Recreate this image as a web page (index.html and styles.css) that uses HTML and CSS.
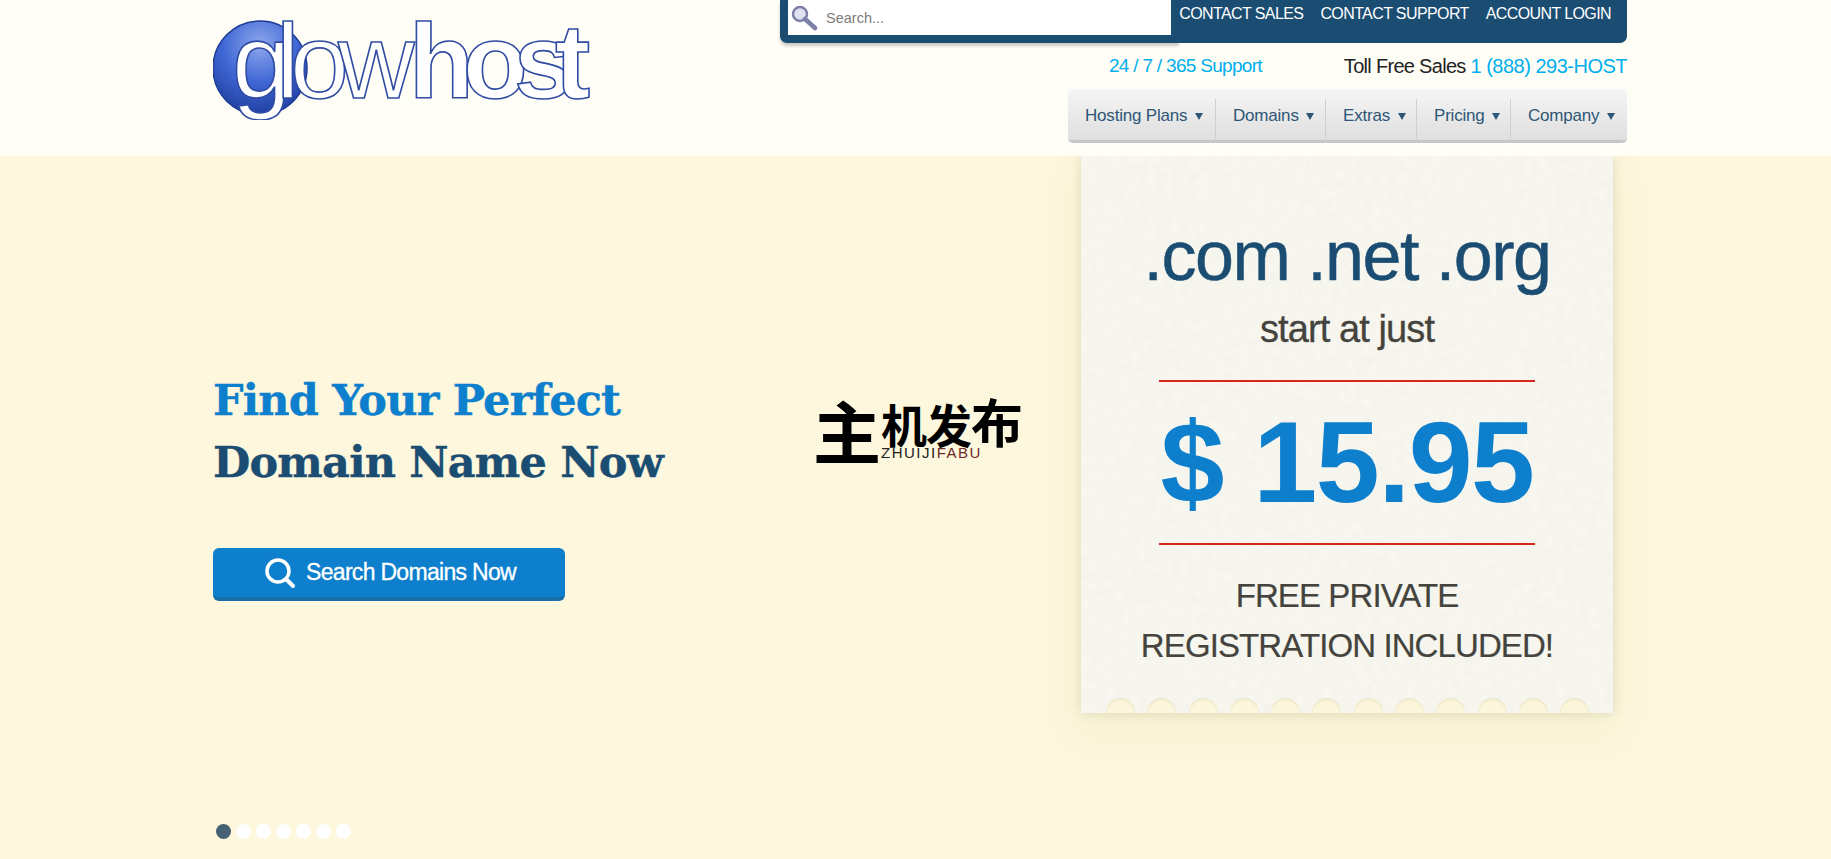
FILE: index.html
```html
<!DOCTYPE html>
<html lang="en">
<head>
    <meta charset="utf-8">
    <title>GlowHost</title>
    <meta name="viewport" content="width=device-width, initial-scale=1.0">
    <link rel="stylesheet" href="styles.css">
</head>
<body>
    <header class="site-header">
        <a class="logo" href="#">
            <svg width="380" height="120" viewBox="0 0 380 120">
                <defs>
                    <radialGradient id="ball" cx="50%" cy="25%" r="80%">
                        <stop offset="0" stop-color="#8ea8ec"/>
                        <stop offset="0.5" stop-color="#4067d4"/>
                        <stop offset="1" stop-color="#1c3a9a"/>
                    </radialGradient>
                </defs>
                <circle cx="47" cy="68" r="47" fill="url(#ball)" stroke="#1e3a94" stroke-width="1.5"/>
                <text class="logo-word" y="98"><tspan x="19">g</tspan><tspan x="63">l</tspan><tspan x="77">o</tspan><tspan x="125">w</tspan><tspan class="logo-bold" x="196">h</tspan><tspan class="logo-bold" x="250">o</tspan><tspan class="logo-bold" x="301">s</tspan><tspan class="logo-bold" x="342">t</tspan></text>
            </svg>
        </a>
        <div class="header-right">
            <div class="topbar">
                <div class="topbar-search">
                    <form class="search-form">
                        <svg class="search-icon" width="28" height="28" viewBox="0 0 28 28">
                            <circle cx="10" cy="10" r="7" fill="#dfe1ee" stroke="#7c7fa6" stroke-width="2.5"/>
                            <path d="M15 15 L25 24" stroke="#7c7fa6" stroke-width="4.5" stroke-linecap="round"/>
                        </svg>
                        <input type="text" placeholder="Search...">
                    </form>
                </div>
                <nav class="topbar-links">
                    <a href="#">CONTACT SALES</a>
                    <a href="#">CONTACT SUPPORT</a>
                    <a href="#">ACCOUNT LOGIN</a>
                </nav>
            </div>
            <div class="phones">
                <span class="phone-support">24 / 7 / 365 Support</span>
                <span class="phone-sales">Toll Free Sales <b>1 (888) 293-HOST</b></span>
            </div>
            <nav class="mainnav">
                <a class="nav-hosting" href="#">Hosting Plans <i></i></a>
                <a class="nav-domains" href="#">Domains <i></i></a>
                <a class="nav-extras" href="#">Extras <i></i></a>
                <a class="nav-pricing" href="#">Pricing <i></i></a>
                <a class="nav-company" href="#">Company <i></i></a>
            </nav>
        </div>
    </header>

    <section class="hero">
        <div class="hero-left">
            <h1><span>Find Your Perfect</span><br>Domain Name Now</h1>
            <a class="search-btn" href="#">
                <svg width="32" height="32" viewBox="0 0 32 32">
                    <circle cx="14" cy="14" r="11" fill="none" stroke="#fff" stroke-width="3.5"/>
                    <path d="M22 22 L29 29" stroke="#fff" stroke-width="4" stroke-linecap="round"/>
                </svg>
                Search Domains Now
            </a>
            <div class="dots">
                <span class="dot active"></span>
                <span class="dot"></span>
                <span class="dot"></span>
                <span class="dot"></span>
                <span class="dot"></span>
                <span class="dot"></span>
                <span class="dot"></span>
            </div>
        </div>

        <div class="zhuji">
            <div class="zhuji-big">主</div>
            <div class="zhuji-right">
                <div class="zhuji-cn">机发<span>布</span></div>
                <div class="zhuji-en">ZHUIJI<em>FABU</em></div>
            </div>
        </div>

        <div class="ticket">
            <svg class="paper" width="100%" height="100%">
                <filter id="grain">
                    <feTurbulence type="fractalNoise" baseFrequency="0.12" numOctaves="4" seed="4"/>
                    <feColorMatrix values="0 0 0 0 0.6  0 0 0 0 0.6  0 0 0 0 0.52  0 0 0 0.14 -0.02"/>
                </filter>
                <rect width="100%" height="100%" filter="url(#grain)"/>
            </svg>
            <div class="ticket-tlds">.com .net .org</div>
            <div class="ticket-start">start at just</div>
            <div class="ticket-price">$ 15.95</div>
            <div class="ticket-free">FREE PRIVATE<br>REGISTRATION INCLUDED!</div>
            <div class="notches">
                <span></span><span></span><span></span><span></span><span></span><span></span>
                <span></span><span></span><span></span><span></span><span></span><span></span>
            </div>
        </div>
    </section>
</body>
</html>
```

FILE: styles.css
```css
html, body {
    height: 100%;
}

body {
    margin: 0;
    font-family: 'Liberation Sans', Arial, sans-serif;
    display: flex;
    flex-direction: column;
    overflow: hidden;
    background-color: #fcf7dd;
}

a {
    text-decoration: none;
    color: inherit;
}

/* header */
.site-header {
    position: relative;
    z-index: 1;
    height: 156px;
    flex: none;
    display: flex;
    justify-content: space-between;
    padding: 0 204px 0 213px;
    background-color: #fffef6;
}

.logo {
    display: block;
    height: 120px;
}

.logo-word {
    font-family: 'Liberation Sans', sans-serif;
    font-size: 106px;
    fill: #ffffff;
    stroke: #2f4ba3;
    stroke-width: 1.6px;
}

.logo-bold {
    font-weight: bold;
}

.header-right {
    width: 847px;
}

.topbar {
    display: flex;
    height: 43px;
}

.topbar-search {
    width: 413px;
    padding: 0 8px;
    box-sizing: border-box;
    background-color: #1b4d72;
    border-radius: 0 0 0 7px;
    box-shadow: 0 3px 3px rgba(0, 0, 0, 0.2);
}

.search-form {
    display: flex;
    align-items: center;
    height: 35px;
    background-color: #ffffff;
}

.search-icon {
    margin-left: 2px;
    flex: none;
}

.search-form input {
    flex: 1;
    min-width: 0;
    border: none;
    outline: none;
    padding: 0;
    margin-left: 8px;
    background: none;
    font-family: 'Liberation Sans', sans-serif;
    font-size: 14.5px;
}

.search-form input::placeholder {
    color: #7d7d7d;
    opacity: 1;
}

.topbar-links {
    position: relative;
    flex: 1;
    display: flex;
    justify-content: flex-end;
    gap: 17px;
    padding: 5px 16px 0 0;
    background-color: #1b4d72;
    border-radius: 0 0 7px 0;
    color: #ffffff;
    font-size: 16px;
    letter-spacing: -0.6px;
    line-height: 18px;
    white-space: nowrap;
}

.phones {
    display: flex;
    justify-content: flex-end;
    gap: 82px;
    height: 46px;
    padding-top: 10px;
    box-sizing: border-box;
    font-size: 20px;
    letter-spacing: -0.7px;
    line-height: 26px;
    color: #222222;
}

.phone-support {
    font-size: 19px;
    color: #00aeef;
}

.phone-sales b {
    font-weight: normal;
    letter-spacing: -0.5px;
    color: #00aeef;
}

.mainnav {
    display: flex;
    width: 559px;
    height: 54px;
    margin-left: auto;
    box-sizing: border-box;
    background: linear-gradient(#f5f5f5, #dfdfdf);
    border-bottom: 3px solid #c6c6c6;
    border-radius: 5px;
    font-size: 17px;
    letter-spacing: -0.2px;
    color: #2d5677;
}

.mainnav a {
    box-sizing: border-box;
    margin-top: 10px;
    padding: 4px 0 0 17px;
    height: 44px;
    line-height: 26px;
    border-right: 1px solid #cfcfcf;
    white-space: nowrap;
}

.mainnav a:last-child {
    border-right: none;
}

.nav-hosting { width: 148px; }
.nav-domains { width: 110px; }
.nav-extras { width: 91px; }
.nav-pricing { width: 94px; }
.nav-company { width: 116px; }

.mainnav i {
    display: inline-block;
    margin-left: 3px;
    vertical-align: 1px;
    border-left: 4px solid transparent;
    border-right: 4px solid transparent;
    border-top: 7px solid #2d5677;
}

/* hero */
.hero {
    flex: 1;
    min-height: 0;
    display: flex;
    padding: 0 218px 0 213px;
}

.hero-left {
    width: 603px;
    flex: none;
    display: flex;
    flex-direction: column;
    align-items: flex-start;
    padding-top: 213px;
    box-sizing: border-box;
}

.hero-left h1 {
    margin: 0;
    font-family: 'DejaVu Serif', serif;
    font-size: 43px;
    line-height: 62px;
    font-weight: bold;
    letter-spacing: -0.8px;
    -webkit-text-stroke: 0.4px;
    color: #1b4d72;
    white-space: nowrap;
}

.hero-left h1 span {
    color: #0d7fcc;
}

.search-btn {
    display: flex;
    align-items: center;
    justify-content: center;
    gap: 10px;
    width: 352px;
    height: 53px;
    margin-top: 55px;
    padding-left: 2px;
    box-sizing: border-box;
    background-color: #0d7fcc;
    border-bottom: 4px solid #1a6ea8;
    border-radius: 6px;
    color: #ffffff;
    font-size: 23px;
    letter-spacing: -0.7px;
    -webkit-text-stroke: 0.3px;
}

.dots {
    display: flex;
    gap: 5px;
    margin: auto 0 20px 3px;
}

.dot {
    width: 15px;
    height: 15px;
    border-radius: 50%;
    background-color: #ffffff;
}

.dot.active {
    background-color: #456173;
}

.zhuji {
    flex: none;
    display: flex;
    height: 62px;
    margin-top: 240px;
    color: #000000;
    font-family: 'Noto Sans CJK SC', sans-serif;
    font-weight: bold;
}

.zhuji-big {
    font-size: 68px;
    line-height: 68px;
    margin-left: -3px;
}

.zhuji-right {
    display: flex;
    flex-direction: column;
    width: 136px;
}

.zhuji-cn {
    height: 50px;
    font-size: 46px;
    line-height: 50px;
    letter-spacing: -1px;
    white-space: nowrap;
}

.zhuji-cn span {
    font-size: 52px;
}

.zhuji-en {
    font-family: 'Liberation Sans', sans-serif;
    font-weight: normal;
    font-size: 15px;
    line-height: 14px;
    letter-spacing: 1.5px;
    color: #222222;
    white-space: nowrap;
}

.zhuji-en em {
    font-style: normal;
    color: #6e2a2a;
}

.ticket {
    position: relative;
    width: 532px;
    height: 557px;
    flex: none;
    margin-left: auto;
    box-sizing: border-box;
    padding-top: 60px;
    background-color: #f8f8f1;
    box-shadow: 0 0 10px rgba(120, 110, 60, 0.2), 0 16px 40px rgba(190, 180, 90, 0.1);
    text-align: center;
    color: #45433d;
}

.paper {
    position: absolute;
    top: 0;
    left: 0;
}

.ticket > div {
    position: relative;
}

.ticket-tlds {
    font-size: 70px;
    line-height: 80px;
    letter-spacing: -1.5px;
    -webkit-text-stroke: 0.5px;
    color: #1b4d72;
}

.ticket-start {
    margin-top: 10px;
    font-size: 38px;
    line-height: 46px;
    letter-spacing: -0.9px;
    -webkit-text-stroke: 0.3px;
}

.ticket-price {
    margin: 28px 78px 0;
    height: 161px;
    border-top: 2px solid #d9261c;
    border-bottom: 2px solid #d9261c;
    font-size: 115px;
    line-height: 161px;
    font-weight: bold;
    letter-spacing: -1.5px;
    color: #0d7fcc;
}

.ticket-free {
    margin-top: 26px;
    font-size: 33px;
    line-height: 50px;
    letter-spacing: -0.9px;
    -webkit-text-stroke: 0.2px;
}

.ticket > .notches {
    position: absolute;
    left: 25px;
    bottom: 0;
    display: flex;
    gap: 12.3px;
}

.notches span {
    width: 29px;
    height: 15px;
    background-color: #fbf6dc;
    border-radius: 15px 15px 0 0;
    box-shadow: inset 0 2px 2px rgba(120, 110, 60, 0.1);
}
```
